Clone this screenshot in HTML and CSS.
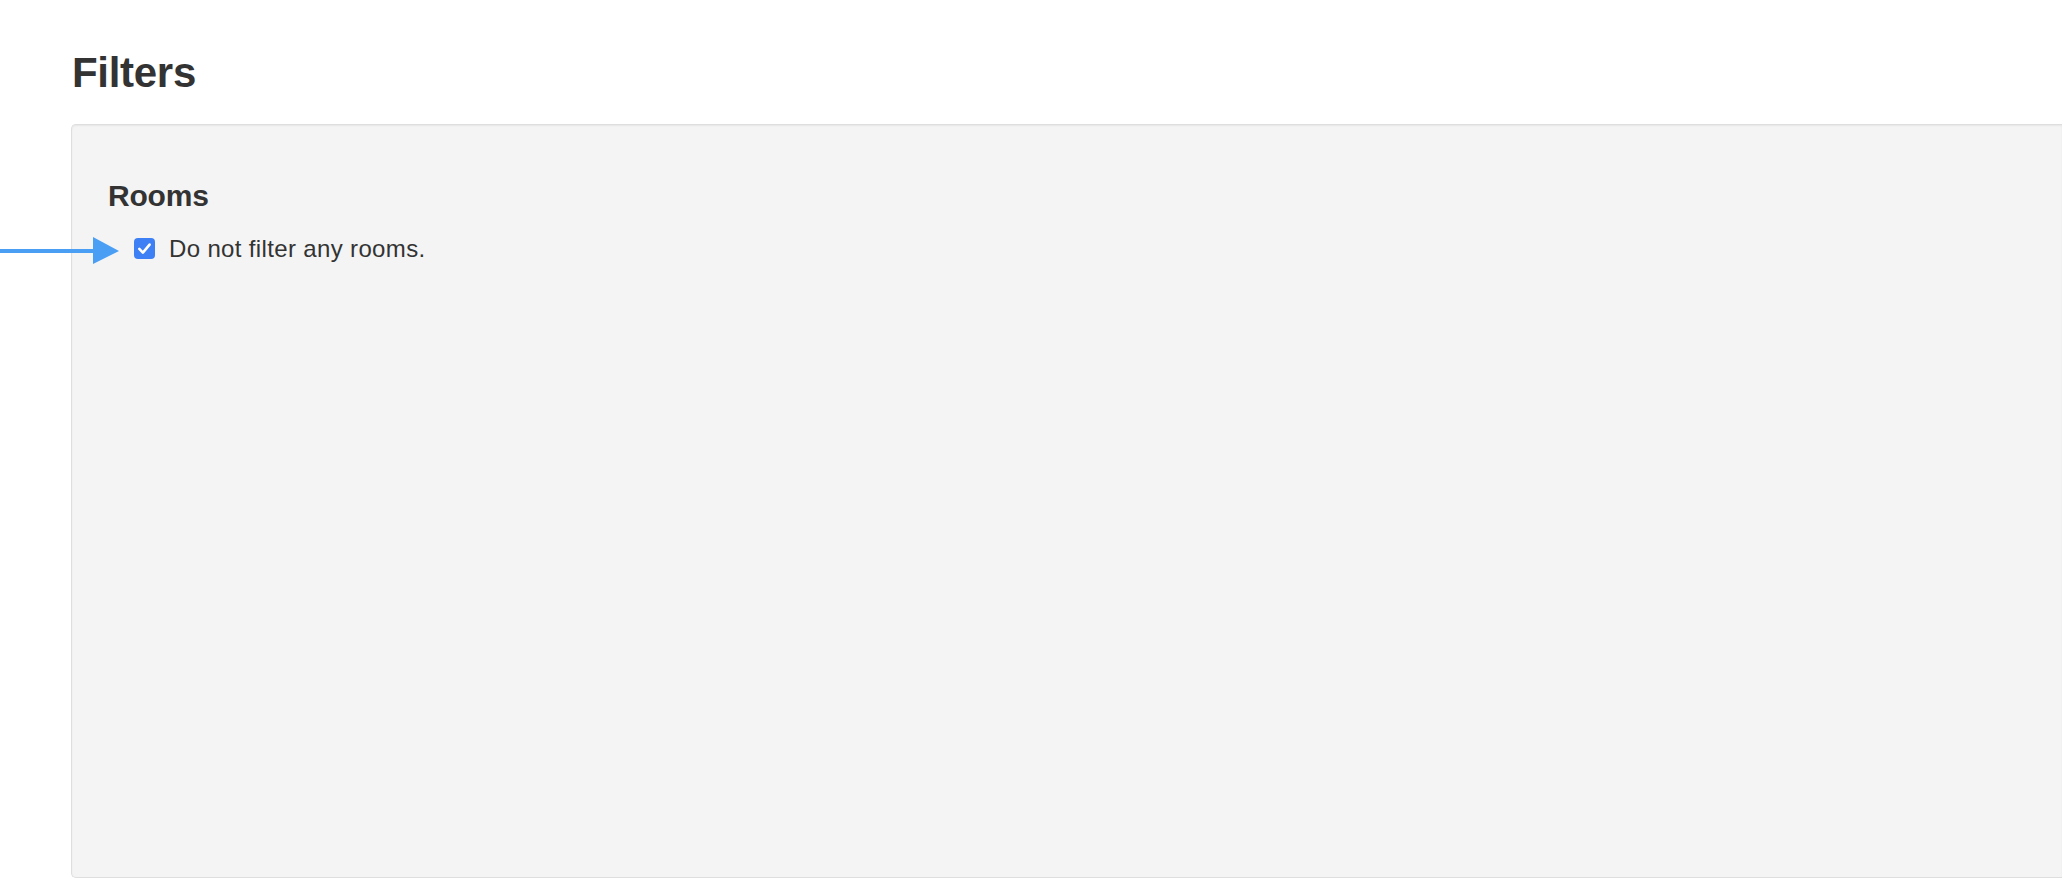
FILE: index.html
```html
<!DOCTYPE html>
<html lang="en">
<head>
  <meta charset="UTF-8">
  <title>Filters</title>
  <link rel="stylesheet" href="styles.css">
</head>
<body>
  <div class="page">
    <h1>Filters</h1>
    <div class="well">
      <h3>Rooms</h3>
      <label class="check-row">
        <span class="checkbox">
          <svg width="21" height="21" viewBox="0 0 21 21">
            <rect x="0" y="0" width="21" height="21" rx="4" fill="#3d7ff5"/>
            <path d="M5.3 10.9 L8.9 14.6 L15.6 6.6" fill="none" stroke="#fff" stroke-width="2.6" stroke-linecap="round" stroke-linejoin="round"/>
          </svg>
        </span>
        Do not filter any rooms.
      </label>
    </div>
  </div>

  <!-- pointer to the checkbox -->
  <svg class="pointer" width="120" height="28" viewBox="0 0 120 28">
    <rect x="0" y="12" width="96" height="4" fill="#4a9ff5"/>
    <polygon points="93,0 119,14 93,27" fill="#4a9ff5"/>
  </svg>
</body>
</html>
```

FILE: styles.css
```css
html, body {
  margin: 0;
  padding: 0;
  background: #ffffff;
  overflow: hidden;
}
body {
  font-family: "Liberation Sans", Arial, sans-serif;
  color: #333333;
  position: relative;
  height: 884px;
}
.page {
  padding-left: 71px;
}
h1 {
  font-size: 42px;
  line-height: 46px;
  font-weight: bold;
  margin: 50px 0 28px 1px;
  letter-spacing: -0.3px;
}
.well {
  box-sizing: border-box;
  background: #f4f4f4;
  border: 1px solid #dedede;
  border-right: none;
  border-radius: 5px 0 0 5px;
  box-shadow: inset 0 1px 2px rgba(0,0,0,0.06);
  height: 754px;
  padding: 54px 36px 0;
}
h3 {
  font-size: 30px;
  line-height: 33px;
  font-weight: bold;
  margin: 0 0 20px;
  letter-spacing: -0.2px;
}
.check-row {
  display: flex;
  align-items: center;
  font-size: 24px;
  line-height: 34px;
  letter-spacing: 0.35px;
  padding-left: 26px;
}
.checkbox {
  display: flex;
  width: 21px;
  height: 21px;
  margin-right: 14px;
  margin-top: -1px;
}
.pointer {
  position: absolute;
  left: 0;
  top: 237px;
}
```
